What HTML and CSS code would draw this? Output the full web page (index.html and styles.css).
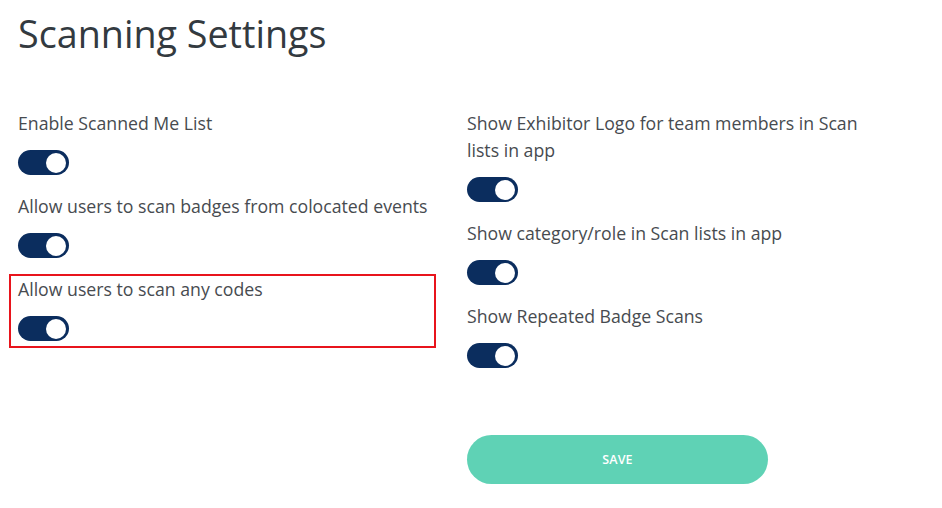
FILE: index.html
```html
<!DOCTYPE html>
<html>
<head>
<meta charset="utf-8">
<link rel="stylesheet" href="styles.css">
</head>
<body>
<div class="page">
  <h1 class="title">Scanning Settings</h1>
  <div class="columns">
    <div class="col">
      <div class="setting">
        <div class="label">Enable Scanned Me List</div>
        <span class="toggle"><span class="knob"></span></span>
      </div>
      <div class="setting">
        <div class="label">Allow users to scan badges from colocated events</div>
        <span class="toggle"><span class="knob"></span></span>
      </div>
      <div class="setting highlighted">
        <div class="label">Allow users to scan any codes</div>
        <span class="toggle"><span class="knob"></span></span>
      </div>
    </div>
    <div class="col">
      <div class="setting">
        <div class="label wrap">Show Exhibitor Logo for team members in Scan lists in app</div>
        <span class="toggle"><span class="knob"></span></span>
      </div>
      <div class="setting">
        <div class="label">Show category/role in Scan lists in app</div>
        <span class="toggle"><span class="knob"></span></span>
      </div>
      <div class="setting">
        <div class="label">Show Repeated Badge Scans</div>
        <span class="toggle"><span class="knob"></span></span>
      </div>
      <button class="save">SAVE</button>
    </div>
  </div>
</div>
</body>
</html>
```

FILE: styles.css
```css
html, body {
  margin: 0;
  padding: 0;
  background: #ffffff;
}
body {
  font-family: "Open Sans", "Noto Sans", sans-serif;
  color: #3d3d3d;
}
.page {
  padding: 0 0 0 18px;
}
.title {
  margin: 0;
  padding-top: 10px;
  font-size: 37.7px;
  font-weight: 400;
  line-height: 48px;
  color: #333a40;
}
.columns {
  display: grid;
  grid-template-columns: 449px 400px;
  margin-top: 52px;
}
.col {
  display: flex;
  flex-direction: column;
}
.setting {
  display: flex;
  flex-direction: column;
  align-items: flex-start;
  padding-bottom: 18px;
}
.label {
  font-size: 17.7px;
  line-height: 27px;
  color: #474b50;
}
.label.wrap {
  max-width: 400px;
}
.toggle {
  margin-top: 13px;
  width: 51px;
  height: 25px;
  border-radius: 13px;
  background: #0b2d5e;
  display: flex;
  align-items: center;
  justify-content: flex-end;
  padding-right: 3px;
  box-sizing: border-box;
}
.knob {
  width: 20px;
  height: 20px;
  border-radius: 50%;
  background: #ffffff;
}
.highlighted {
  box-sizing: border-box;
  margin-left: -9px;
  width: 427px;
  padding: 0 0 5px 7px;
  border: 2px solid #e8141c;
  margin-top: -2px;
}
.save {
  margin-top: 49px;
  width: 301px;
  height: 49px;
  border: none;
  border-radius: 25px;
  background: #5fd2b5;
  color: #ffffff;
  font-family: "Open Sans", sans-serif;
  font-size: 12.5px;
  font-weight: 600;
  letter-spacing: 0.1px;
}
```
